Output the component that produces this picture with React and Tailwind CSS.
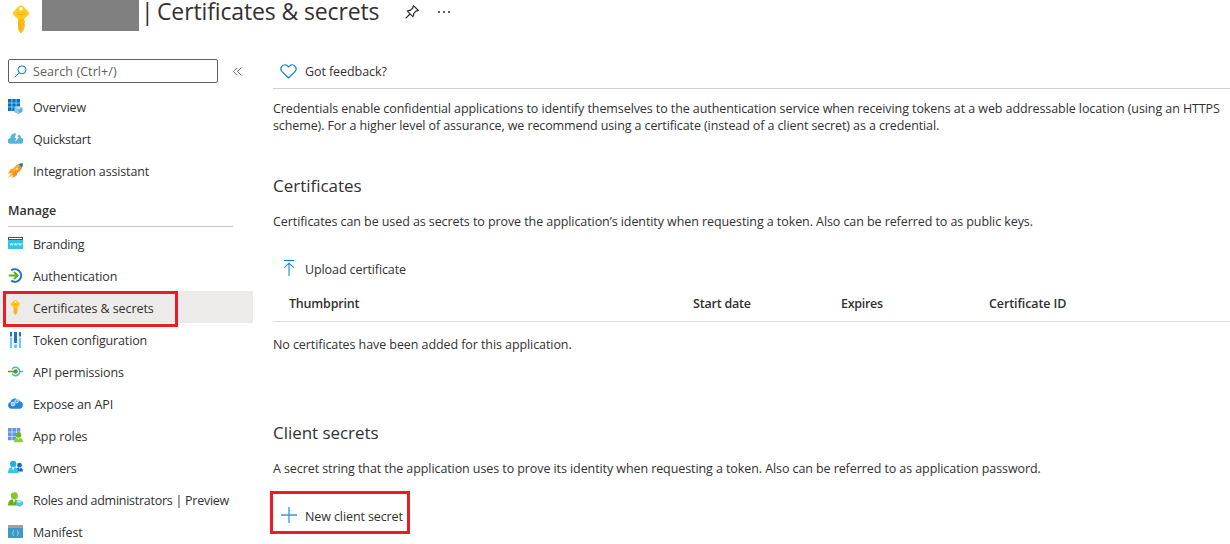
import React from "react";

const Svg = ({ size = "size-[15px]", box = "0 0 15 15", children }) => (
  <svg className={`${size} shrink-0`} viewBox={box} fill="none">{children}</svg>
);

const KeyShape = () => (
  <>
    <path d="M6 13h6v2l1 1v1.800l-1 1 1 1v1.800l-1 1v2L9 28.500 6 25z" fill="#FDBB1C" />
    <path d="M9 .5c1 0 1.900.4 2.600 1.100l4.900 5.100c1 1 1 2.300 0 3.300L12.800 13.500c-.4.400-.8.500-1.300.500h-5c-.5 0-.9-.1-1.300-.5L1.500 10c-1-1-1-2.300 0-3.300l4.900-5.100C7.100.9 8 .5 9 .5Z" fill="#FFCC22" />
    <circle cx="9" cy="3.700" r="1.700" fill="#fff" />
    <path d="M4.800 7.800h8.400M4.800 9.600h8.400" stroke="#F3AC10" strokeWidth=".8" />
    <path d="M8 15v9.500" stroke="#F3AC10" strokeWidth=".9" />
  </>
);

const SmallKey = () => (
  <Svg>
    <path d="M5.600 6.500h3.600v2l.6.700-.6.800v1l.6.700-.6.800V13l-1.700 2-1.900-2z" fill="#FBB117" />
    <path d="M7.400 0c.6 0 1.200.2 1.600.7l2.600 2.600c.5.500.5 1.300 0 1.800L9.500 7.600H5.300L3.200 5.100c-.5-.5-.5-1.300 0-1.800L5.800.7C6.200.2 6.800 0 7.400 0Z" fill="#FFC61E" />
    <circle cx="7.400" cy="1.900" r=".9" fill="#fff" />
    <path d="M5.400 4.700h4" stroke="#F3A60C" strokeWidth=".7" />
  </Svg>
);

const icons = {
  overview: (
    <Svg>
      <path d="M0 0h3.700v3.700H0zM4.200 0h3.600v3.700H4.200zM8.300 0H12v3.700H8.300zM0 4.200h3.700v3.600H0zM4.200 4.200h3.600v3.600H4.200zM8.300 4.200H12v3.600H8.300zM0 8.300h3.700V12H0zM4.200 8.300h3.600V12H4.200z" fill="#0072C6" />
      <path d="M10.500 7l4 1.700v4.200l-4 1.900-4-1.900V8.700z" fill="#59B4D9" />
      <path d="M10.500 7l4 1.700-4 1.800-4-1.800z" fill="#B3DFF0" />
      <path d="M10.500 10.500v4.300l-4-1.900V8.700z" fill="#84CBE5" />
    </Svg>
  ),
  quickstart: (
    <Svg>
      <path d="M2.900 12.800A2.900 2.900 0 0 1 2.400 7 4.500 4.500 0 0 1 6.700 2.300c1.200 0 2.200.4 3 1.100A3.500 3.500 0 0 1 13 7.100a2.800 2.800 0 0 1-.8 5.700z" fill="#59B4D9" />
      <path d="M8.200 2 6.700 7h1.600l-1.200 4L11 6H9.300L11.300 2z" fill="#fff" />
    </Svg>
  ),
  rocket: (
    <Svg>
      <path d="M6 5.500 2.800 6.200 0 10.500l4.200-.8zM9.400 9.200l-.7 3.300L4.500 15l.3-4z" fill="#F5971F" />
      <path d="M14.800.2C9.500.7 6.500 2.500 2.400 9.400l3.100 3.100C12.500 8.500 14.500 5 14.800.2z" fill="#FFAA2B" />
      <path d="M14.800.2 4 10.900l1.500 1.600C12.500 8.500 14.500 5 14.800.2z" fill="#F98F1D" />
      <path d="M14.800.2c-1.700.1-3.100.4-4.300 1l3.300 3.300c.6-1.300.9-2.700 1-4.300z" fill="#1B78AE" />
      <circle cx="9" cy="6" r="1.300" fill="#FFE0A6" />
      <path d="M2.800 10 0 14.900l5.300-2.600z" fill="#FFC83D" />
    </Svg>
  ),
  branding: (
    <Svg>
      <path d="M0 3.500h15V13H0z" fill="#32C5E8" />
      <path d="M0 1h15v3H0z" fill="#1B5EA8" />
      <path d="M1 2h13v1H1z" fill="#fff" />
      <path d="m2 7.300.8 2 .8-2 .8 2 .8-2m1 0 .8 2 .8-2 .8 2 .8-2m1 0 .8 2 .8-2 .8 2 .8-2" stroke="#D9F8FF" strokeWidth=".8" />
    </Svg>
  ),
  auth: (
    <Svg>
      <path d="M3.300 2.300A6.300 6.300 0 1 1 3.300 12.700" stroke="#1475C8" strokeWidth="2" />
      <path d="M.8 7.500h8.500M6 3.900 9.700 7.500 6 11.100" stroke="#62AD1E" strokeWidth="2" />
    </Svg>
  ),
  key: <SmallKey />,
  token: (
    <Svg box="0 0 15 16" size="w-[15px] h-4">
      <path d="M2 0h2v4.500H2zM6 0h3v11H6zM11 0h2v4.500h-2z" fill="#1F74C9" />
      <path d="M2 5.500h2V16H2zM6 12.500h3V16H6zM11 5.500h2V16h-2z" fill="#5AD6F5" />
    </Svg>
  ),
  api: (
    <Svg>
      <path d="M4 5.300A4.200 4.200 0 1 1 4 9.700M11.500 7.500H15" stroke="#52B2D8" strokeWidth="1.500" />
      <path d="M0 7.500h6" stroke="#4F9B18" strokeWidth="1.500" />
      <circle cx="7.600" cy="7.500" r="2.200" fill="#4F9B18" />
    </Svg>
  ),
  expose: (
    <Svg>
      <path d="M3.500 12.800A3.500 3.500 0 0 1 2.400 6 5.300 5.300 0 0 1 12 5.200 3.900 3.900 0 0 1 11.500 12.800z" fill="#2585DC" />
      <circle cx="5" cy="8" r="1.900" fill="#82BDEE" stroke="#D5EBFF" strokeWidth="1" />
      <circle cx="8.700" cy="5.200" r="1.700" fill="#64ABE8" stroke="#D5EBFF" strokeWidth="1" />
    </Svg>
  ),
  roles: (
    <Svg>
      <path d="M0 0h3.700v3.700H0zM4.300 0h3.700v3.700H4.300zM8.600 0h3.700v3.700H8.600zM0 4.300h3.700v3.700H0zM4.300 4.300h3.700v3.700H4.300zM8.600 4.300h3.700v3.700H8.600zM0 8.600h3.700v3.700H0zM4.300 8.600h3.700v3.700H4.300z" fill="#6595E9" />
      <path d="M6 14.300c.2-3.200 1.500-4.800 4.500-4.800s4.300 1.600 4.500 4.800z" fill="#86D12F" />
      <path d="m9.300 9.500 1.200 2.500 1.200-2.500z" fill="#fff" />
      <circle cx="10.500" cy="7" r="2.700" fill="#69B51D" />
    </Svg>
  ),
  owners: (
    <Svg>
      <path d="M8 11.500c.2-3.500 1.200-4 3.500-4S14.800 8.500 15 11.500z" fill="#0F6CCB" />
      <circle cx="11.500" cy="5.200" r="2.400" fill="#0F6CCB" />
      <path d="M0 13.200C.2 8.500 1.600 7 5 7s5.400 1.500 5.600 6.200z" fill="#36C5E8" />
      <path d="M3.800 7h2.800L5.200 10.700zM10.900 7.500h1.600l-.8 2.200z" fill="#fff" />
      <circle cx="5.200" cy="4" r="3.200" fill="#2BAEDF" />
    </Svg>
  ),
  admins: (
    <Svg>
      <path d="M0 13.500c.2-4.700 2-6.300 5.600-6.300s5.200 1.600 5.400 6.300z" fill="#6EAD20" />
      <path d="M4.500 7.200h3L6 11z" fill="#fff" />
      <circle cx="6.400" cy="3.700" r="3.500" fill="#84C62B" />
      <path d="m11.500 8 3.500 1.300v3.500L11.500 15 8 12.800V9.300z" fill="#50C5E8" />
      <path d="m11.500 8 3.500 1.300-3.500 2L8 9.300z" fill="#A5E6F5" />
    </Svg>
  ),
  manifest: (
    <Svg>
      <path d="M0 1h15v3H0z" fill="#A0A1A2" />
      <path d="M0 4h15v10H0z" fill="#3E99C7" />
      <path d="M6 6.300c-1 .1-.7 1-.8 1.800 0 .6-.4.900-.8.900.4 0 .8.300.8.900.1.800-.2 1.700.8 1.800M9 6.300c1 .1.700 1 .8 1.800 0 .6.4.9.8.9-.4 0-.8.300-.8.900-.1.800.2 1.700-.8 1.800" stroke="#BFE0F0" strokeWidth=".7" />
    </Svg>
  ),
};

const topItems = [
  ["overview", "Overview", "tracking-[-0.16px]"],
  ["quickstart", "Quickstart", "tracking-[-0.2px]"],
  ["rocket", "Integration assistant", "tracking-[-0.14px]"],
];
const manageItems = [
  ["branding", "Branding", "tracking-[-0.22px]"],
  ["auth", "Authentication", "tracking-[-0.1px]"],
  ["key", "Certificates & secrets", "tracking-[-0.08px]"],
  ["token", "Token configuration", "tracking-[-0.14px]"],
  ["api", "API permissions", "tracking-[-0.14px]"],
  ["expose", "Expose an API", "tracking-[-0.12px]"],
  ["roles", "App roles", "tracking-[-0.08px]"],
  ["owners", "Owners", "tracking-[-0.3px]"],
  ["admins", "Roles and administrators | Preview", "tracking-[-0.26px]"],
  ["manifest", "Manifest", "tracking-[-0.12px]"],
];

const NavItem = ({ item: [icon, label, tracking], pad, iconPad }) => (
  <li className={`flex h-8 items-center pl-2 ${icon === "key" ? "bg-[#edebe9]" : ""}`}>
    <span className={`flex h-8 w-[25px] shrink-0 items-start ${iconPad}`}>{icons[icon]}</span>
    <span className={`whitespace-nowrap ${pad} ${tracking}`}>{label}</span>
  </li>
);

export default function App() {
  return (
    <div className="relative flex h-[544px] w-[1230px] flex-col overflow-hidden bg-white font-['Open_Sans',sans-serif] text-[12.5px] leading-[17px] text-[#323130]">
      <header className="flex h-[59px] shrink-0 items-start">
        <div className="pl-3 pt-[5px]"><Svg size="w-[18px] h-[29px]" box="0 0 18 29"><KeyShape /></Svg></div>
        <div className="ml-3 h-[31px] w-[97px] bg-[#808080]" />
        <h1 className="ml-[2px] flex w-[264px] gap-[2px] whitespace-nowrap text-[23px] leading-[22px] tracking-[-0.13px]">
          <span className="w-[14px]">|</span>
          <span>Certificates &amp; secrets</span>
        </h1>
        <div className="pt-[5px]">
          <Svg size="size-[14px]" box="0 0 14 14">
            <path d="M8.700.8 13.200 5.300l-1 .7-.9-.1-2.700 2.800c.3 1.300-.1 2.200-.7 3L2.300 6.100c.8-.7 1.800-.9 3-.7L8 2.700l-.1-1zM5 9 .6 13.400" stroke="#252423" strokeWidth="1.100" />
          </Svg>
        </div>
        <div className="flex gap-[3px] pl-[19px] pt-[11px]">
          <i className="size-[2px] bg-[#605e5c]" /><i className="size-[2px] bg-[#605e5c]" /><i className="size-[2px] bg-[#605e5c]" />
        </div>
      </header>
      <div className="flex min-h-0 flex-1">
        <nav className="w-[253px] shrink-0">
          <div className="flex h-8 items-start pl-2">
            <div className="flex h-6 w-[210px] items-center rounded-[2px] border border-[#605e5c] pl-[5px] text-[#605e5c]">
              <Svg size="size-[13px]" box="0 0 13 13">
                <circle cx="8" cy="4.800" r="4" stroke="#0078D4" /><path d="M5.200 7.700.5 12.400" stroke="#0078D4" />
              </Svg>
              <span className="pl-1.5 pt-px tracking-[0.08px]">Search (Ctrl+/)</span>
            </div>
            <div className="pl-[15px] pt-2">
              <Svg size="w-[9px] h-[9px]" box="0 0 9 9"><path d="M4.200.7.500 4.500l3.700 3.800M8.200.7 4.500 4.500l3.700 3.800" stroke="#605e5c" strokeWidth=".9" /></Svg>
            </div>
          </div>
          <ul>{topItems.map((i) => <NavItem key={i[0]} item={i} pad="pt-px" iconPad="pt-2" />)}</ul>
          <h2 className="ml-2 flex h-10 w-[225px] items-center border-b border-[#c8c6c4] pt-[7px] font-semibold">Manage</h2>
          <ul>{manageItems.map((i) => <NavItem key={i[0]} item={i} pad="pt-[3px]" iconPad="pt-[9px]" />)}</ul>
        </nav>
        <main className="ml-5 flex min-w-0 flex-1 flex-col whitespace-nowrap">
          <div className="flex h-[30px] shrink-0 items-center border-b border-[#d2d0ce] pb-[5px] pl-[7px]">
            <Svg size="w-[17px] h-[15px]" box="0 0 17 15">
              <path d="M8.500 14 1.900 7.400a3.900 3.900 0 0 1 5.500-5.500l1.100 1.100 1.100-1.100a3.900 3.900 0 0 1 5.500 5.500z" stroke="#0078D4" strokeWidth="1.100" />
            </Svg>
            <span className="pl-2 tracking-[-0.08px]">Got feedback?</span>
          </div>
          <p className="pt-[11px]">
            <span className="block tracking-[-0.085px]">Credentials enable confidential applications to identify themselves to the authentication service when receiving tokens at a web addressable location (using an HTTPS</span>
            <span className="block tracking-[-0.105px]">scheme). For a higher level of assurance, we recommend using a certificate (instead of a client secret) as a credential.</span>
          </p>
          <h3 className="pt-[40px] text-[17px] leading-6 tracking-[-0.02px]">Certificates</h3>
          <p className="pt-[15px] tracking-[-0.08px]">Certificates can be used as secrets to prove the application’s identity when requesting a token. Also can be referred to as public keys.</p>
          <div className="flex h-[48px] shrink-0 items-end pl-[9px]">
            <Svg size="w-[14px] h-[18px]" box="0 0 14 18">
              <path d="M2 .5h10" stroke="#0078D4" /><path d="M7 3v13M2.300 7.700 7 3l4.700 4.700" stroke="#3090DD" strokeWidth="1.200" />
            </Svg>
            <span className="pl-[9px] tracking-[-0.1px]">Upload certificate</span>
          </div>
          <div className="mt-[8px] grid h-[36px] shrink-0 grid-cols-[404px_148px_148px_1fr] items-center border-b border-[#e1dfdd] pl-4 font-semibold tracking-[-0.1px]">
            <span className="tracking-[-0.2px]">Thumbprint</span><span className="tracking-[-0.2px]">Start date</span><span className="tracking-[-0.3px]">Expires</span><span>Certificate ID</span>
          </div>
          <p className="pt-[14px] tracking-[-0.08px]">No certificates have been added for this application.</p>
          <h3 className="pt-[68px] text-[17px] leading-6 tracking-[-0.05px]">Client secrets</h3>
          <p className="pt-[15px] tracking-[-0.085px]">A secret string that the application uses to prove its identity when requesting a token. Also can be referred to as application password.</p>
          <div className="flex h-[48px] shrink-0 items-end pl-2">
            <Svg size="w-4 h-[18px]" box="0 0 16 18"><path d="M8 0v16M0 8h16" stroke="#3A96DD" strokeWidth="1.300" /></Svg>
            <span className="pl-2 tracking-[-0.1px]">New client secret</span>
          </div>
        </main>
      </div>
      <div className="absolute left-[3px] top-[291px] h-9 w-[175px] border-[3px] border-[#ed1c24]" />
      <div className="absolute left-[270px] top-[491px] h-[43px] w-[140px] border-[3px] border-[#ed1c24]" />
    </div>
  );
}
